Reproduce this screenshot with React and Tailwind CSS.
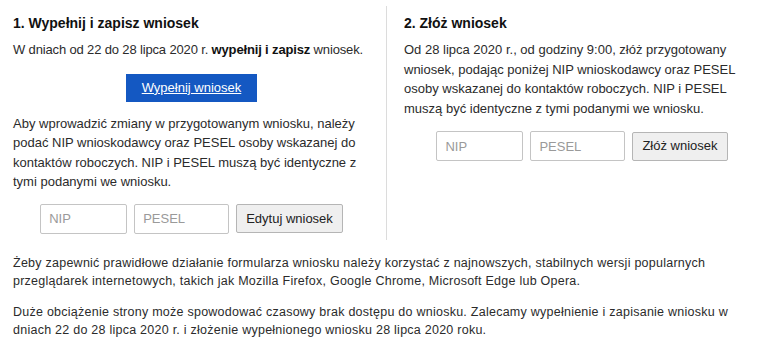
import { useState } from 'react'

function CodeForm({ label }) {
  const [nip, setNip] = useState('')
  const [pesel, setPesel] = useState('')

  return (
    <div className="flex items-center justify-center gap-[7px]">
      <input
        type="text"
        value={nip}
        onChange={(e) => setNip(e.target.value)}
        placeholder="NIP"
        className="h-[30px] w-[87px] rounded-[2px] border border-[#c4c4c4] bg-white px-[8px] text-[13px] text-[#333] outline-none placeholder:text-[#9a9a9a]"
      />
      <input
        type="text"
        value={pesel}
        onChange={(e) => setPesel(e.target.value)}
        placeholder="PESEL"
        className="h-[30px] w-[95px] rounded-[2px] border border-[#c4c4c4] bg-white px-[8px] text-[13px] text-[#333] outline-none placeholder:text-[#9a9a9a]"
      />
      <button className="h-[29px] rounded-[2px] border border-[#b5b5b5] bg-[#efefef] px-[9px] text-[13px] text-[#222]">
        {label}
      </button>
    </div>
  )
}

export default function App() {
  return (
    <div className="w-[768px] bg-white pl-[13px] pr-[8px] pt-[6px] font-['Liberation_Sans',Arial,sans-serif] text-[13px] leading-[19.5px] text-[#2b2b2b]">
      <div className="flex">
        <section className="w-[373px] pr-[16px] pb-[6px] pt-[7px]">
          <h2 className="text-[14px] font-bold leading-[20px] text-[#111]">1. Wypełnij i zapisz wniosek</h2>
          <p className="mt-[7px] whitespace-nowrap tracking-[-0.15px]">
            W dniach od 22 do 28 lipca 2020 r. <b className="text-[#111]">wypełnij i zapisz</b> wniosek.
          </p>
          <div className="mt-[14px] flex justify-center">
            <a href="#" className="flex h-[28px] w-[131px] items-center justify-center bg-[#1458c2] text-white underline">
              Wypełnij wniosek
            </a>
          </div>
          <p className="mt-[12px]">
            Aby wprowadzić zmiany w przygotowanym wniosku, należy podać NIP wnioskodawcy oraz PESEL osoby wskazanej do kontaktów roboczych. NIP i PESEL muszą być identyczne z tymi podanymi we wniosku.
          </p>
          <div className="mt-[12px]">
            <CodeForm label="Edytuj wniosek" />
          </div>
        </section>

        <section className="w-[374px] border-l border-[#dcdcdc] pl-[17px] pt-[7px]">
          <h2 className="text-[14px] font-bold leading-[20px] text-[#111]">2. Złóż wniosek</h2>
          <p className="mt-[7px]">
            Od 28 lipca 2020 r., od godziny 9:00, złóż przygotowany wniosek, podając poniżej NIP wnioskodawcy oraz PESEL osoby wskazanej do kontaktów roboczych. NIP i PESEL muszą być identyczne z tymi podanymi we wniosku.
          </p>
          <div className="mt-[13px]">
            <CodeForm label="Złóż wniosek" />
          </div>
        </section>
      </div>

      <div className="mt-[14px] w-[740px] text-[12.5px] leading-[18.5px] tracking-[0.25px]">
        <p>
          Żeby zapewnić prawidłowe działanie formularza wniosku należy korzystać z najnowszych, stabilnych wersji popularnych przeglądarek internetowych, takich jak Mozilla Firefox, Google Chrome, Microsoft Edge lub Opera.
        </p>
        <p className="mt-[12px]">
          Duże obciążenie strony może spowodować czasowy brak dostępu do wniosku. Zalecamy wypełnienie i zapisanie wniosku w dniach 22 do 28 lipca 2020 r. i złożenie wypełnionego wniosku 28 lipca 2020 roku.
        </p>
      </div>
    </div>
  )
}
